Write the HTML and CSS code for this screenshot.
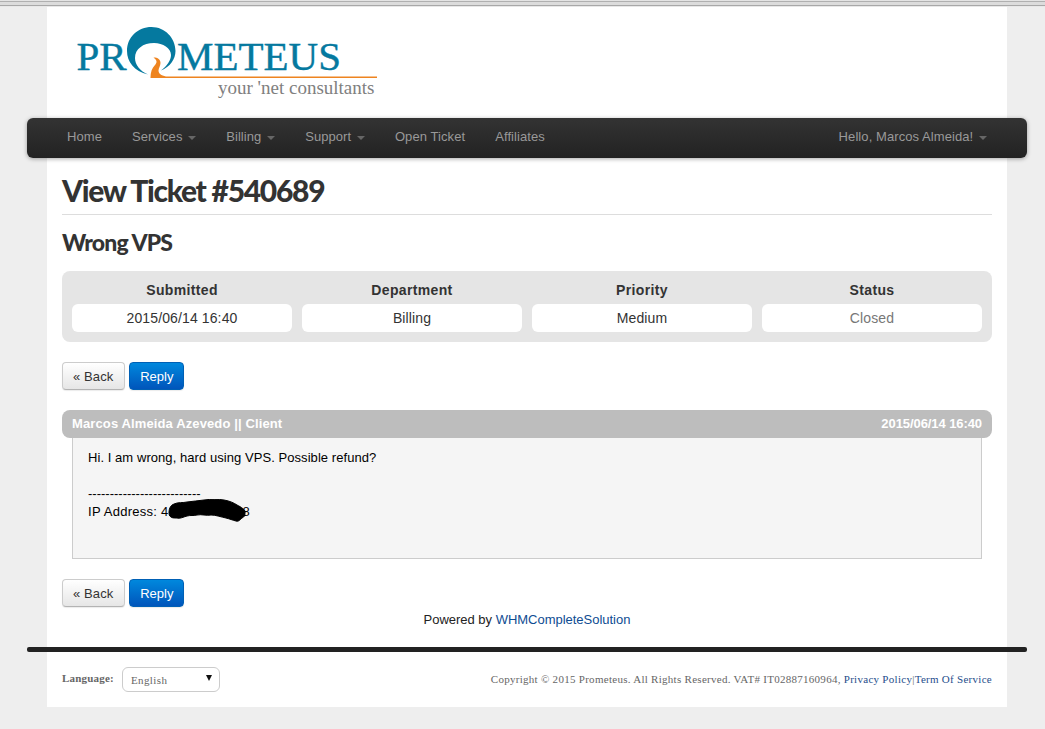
FILE: index.html
```html
<!DOCTYPE html>
<html lang="en">
<head>
<meta charset="utf-8">
<title>View Ticket #540689</title>
<link rel="stylesheet" href="styles.css">
</head>
<body>
<div class="chrome"></div>
<div class="page">
  <header class="brand">
    <svg class="logo" width="310" height="85" viewBox="70 20 310 85" role="img" aria-label="Prometeus">
      <text class="logo-name" x="76.5" y="70">PR</text>
      <text class="logo-name" x="177" y="70">METEUS</text>
      <path class="logo-o" d="M148 74.500C134 71 127 62 127 51C127 37 138 27 151.500 27C165 27 175.500 38 175.500 51C175.500 59 170 67 161 70.500C167 66 171 60 171 55C171 48 163 43 154 43C143 43 135 49 135 58C135 65 140 71 148 74.500Z"/>
      <path class="logo-flame" d="M150.500 77.500C150.500 72 152 68 155 65C157 62.500 157.500 60.500 153.500 57.500C158 57.500 160.500 59.500 160.500 63C160.500 66 158.500 68 158.500 70.500C158.500 73.500 161 75.500 166 76.500L377 76.500L377 78L150.500 78Z"/>
      <text class="logo-tag" x="218" y="94">your 'net consultants</text>
    </svg>
  </header>

  <nav class="navbar">
    <ul class="nav-list">
      <li><a href="#">Home</a></li>
      <li><a href="#">Services <i class="caret"></i></a></li>
      <li><a href="#">Billing <i class="caret"></i></a></li>
      <li><a href="#">Support <i class="caret"></i></a></li>
      <li><a href="#">Open Ticket</a></li>
      <li><a href="#">Affiliates</a></li>
    </ul>
    <ul class="nav-list">
      <li><a href="#">Hello, Marcos Almeida! <i class="caret"></i></a></li>
    </ul>
  </nav>

  <main class="content">
    <h1 class="page-title">View Ticket #540689</h1>
    <h2 class="subject">Wrong VPS</h2>

    <section class="info">
      <div class="info-col"><div class="info-label">Submitted</div><div class="info-value">2015/06/14 16:40</div></div>
      <div class="info-col"><div class="info-label">Department</div><div class="info-value">Billing</div></div>
      <div class="info-col"><div class="info-label">Priority</div><div class="info-value">Medium</div></div>
      <div class="info-col"><div class="info-label">Status</div><div class="info-value closed">Closed</div></div>
    </section>

    <div class="actions">
      <a class="btn" href="#">« Back</a>
      <a class="btn btn-primary" href="#">Reply</a>
    </div>

    <article class="reply">
      <div class="reply-head"><span>Marcos Almeida Azevedo || Client</span><span class="reply-date">2015/06/14 16:40</span></div>
      <div class="reply-body">
        <p>Hi. I am wrong, hard using VPS. Possible refund?</p>
        <p class="sig">--------------------------</p>
        <p class="ip">IP Address: 4<span class="redacted"><svg class="blob" width="82" height="23" viewBox="0 0 82 23" aria-hidden="true"><path d="M3 13C3 9 5 6 8 5C12 3 17 4 21 3C27 2 32 2 38 1C45 0 52 0 58 1C64 2 68 4 71 6C75 8 80 11 79 14C79 17 78 18 76 19C74 21 72 23 70 22C66 21 64 20 60 19C55 18 50 16 45 16C40 17 36 15 31 16C27 17 25 16 21 17C17 18 14 20 11 19C8 19 6 19 5 18C3 17 3 15 3 13Z"/></svg></span>8</p>
      </div>
    </article>

    <div class="actions actions-low">
      <a class="btn" href="#">« Back</a>
      <a class="btn btn-primary" href="#">Reply</a>
    </div>

    <p class="powered">Powered by <a href="#">WHMCompleteSolution</a></p>
  </main>

  <div class="rule"></div>

  <footer class="footer">
    <div class="lang">
      <span class="lang-label">Language:</span>
      <div class="select"><span>English</span><i class="select-arrow"></i></div>
    </div>
    <p class="copyright">Copyright © 2015 Prometeus. All Rights Reserved. VAT# IT02887160964, <a href="#">Privacy Policy</a>|<a href="#">Term Of Service</a></p>
  </footer>
</div>
</body>
</html>
```
FILE: styles.css
```css
* { box-sizing: border-box; }
html, body { margin: 0; padding: 0; }
body {
  background: #eeeeee;
  color: #333333;
  font-family: "Liberation Sans", Arial, sans-serif;
  font-size: 13px;
  line-height: 18px;
}
p, h1, h2, ul { margin: 0; padding: 0; }
a { text-decoration: none; }

.chrome {
  height: 7px;
  background: linear-gradient(#e4e4e4 0 1px, #b0b0b0 1px 2px, #dcdcdc 2px 5px, #a8a8a8 5px 6px, #e8e8e8 6px);
}

.page {
  width: 960px;
  margin-left: 47px;
  background: #ffffff;
  height: 700px;
}

.brand { height: 111px; padding: 13px 0 0 23px; }
.logo { display: block; }
.logo-name {
  font-family: "Liberation Serif", serif;
  font-size: 41px;
  fill: #05799f;
  stroke: #05799f;
  stroke-width: 0.4px;
}
.logo-o { fill: #05799f; }
.logo-flame { fill: #ee8420; }
.logo-tag { font-family: "Liberation Serif", serif; font-size: 19px; fill: #808080; }

.navbar {
  display: flex;
  justify-content: space-between;
  height: 40px;
  margin: 0 -20px;
  padding: 0 25px;
  background: linear-gradient(#333333, #222222);
  border-radius: 6px;
  box-shadow: 0 1px 4px rgba(0, 0, 0, 0.35);
}
.nav-list { display: flex; list-style: none; }
.nav-list a {
  display: block;
  padding: 0 15px;
  line-height: 38px;
  color: #999999;
  letter-spacing: 0.08px;
}
.caret {
  display: inline-block;
  margin-left: 2px;
  vertical-align: middle;
  border-top: 4px solid #666666;
  border-left: 4px solid transparent;
  border-right: 4px solid transparent;
}

.content { padding: 0 15px; }
.page-title {
  height: 57px;
  padding-top: 15px;
  border-bottom: 1px solid #dddddd;
  font-family: Lato, sans-serif;
  font-size: 30px;
  line-height: 34px;
  font-weight: 900;
  letter-spacing: -1.28px;
  color: #333333;
}
.subject {
  margin-top: 13px;
  font-family: Lato, sans-serif;
  font-size: 23px;
  line-height: 28px;
  font-weight: 900;
  letter-spacing: -0.88px;
}

.info {
  display: grid;
  grid-template-columns: repeat(4, 220px);
  gap: 10px;
  margin-top: 15px;
  height: 71px;
  padding: 10px;
  background: #e5e5e5;
  border-radius: 8px;
}
.info-label {
  height: 23px;
  text-align: center;
  font-size: 14px;
  line-height: 18px;
  font-weight: 700;
  letter-spacing: 0.35px;
  color: #333333;
}
.info-value {
  height: 28px;
  background: #ffffff;
  border-radius: 6px;
  text-align: center;
  font-size: 14px;
  line-height: 28px;
  letter-spacing: 0.12px;
}
.closed { color: #777777; }

.actions { display: flex; gap: 4px; margin-top: 20px; }
.actions-low { margin-top: 20px; }
.btn {
  display: block;
  height: 28px;
  padding: 0 11px 0 10px;
  border: 1px solid #cccccc;
  border-bottom-color: #b3b3b3;
  border-radius: 4px;
  background: linear-gradient(#ffffff, #e6e6e6);
  color: #333333;
  line-height: 28px;
  letter-spacing: 0.1px;
  box-shadow: 0 1px 1px rgba(0, 0, 0, 0.08);
}
.btn-primary {
  width: 55px;
  padding: 0;
  text-align: center;
  border-color: #0060b5;
  background: linear-gradient(#0088dd, #0055bb);
  color: #ffffff;
  letter-spacing: 0;
}

.reply { margin-top: 20px; }
.reply-head {
  display: flex;
  justify-content: space-between;
  height: 28px;
  padding: 0 10px;
  background: #bdbdbd;
  border-radius: 8px;
  color: #ffffff;
  font-size: 13px;
  font-weight: 700;
  line-height: 28px;
  letter-spacing: 0.12px;
}
.reply-date { letter-spacing: -0.08px; }
.reply-body {
  height: 121px;
  margin: 0 10px;
  padding: 11px 15px 0;
  background: #f5f5f5;
  border: 1px solid #cccccc;
  border-top: 0;
  color: #000000;
  line-height: 18px;
  letter-spacing: 0.06px;
}
.sig { margin-top: 18px; letter-spacing: 0; }
.ip { letter-spacing: 0.27px; }
.redacted { display: inline-block; width: 74px; height: 10px; position: relative; }
.blob { position: absolute; left: -3px; top: -7px; }
.blob path { fill: #000000; stroke: #000000; stroke-width: 1px; }

.powered { margin-top: 4px; text-align: center; color: #222222; letter-spacing: -0.02px; }
.powered a { color: #0e4c92; }

.rule {
  height: 5px;
  margin: 18px -20px 0;
  background: #222222;
  border-radius: 2px;
}

.footer {
  display: flex;
  justify-content: space-between;
  align-items: center;
  padding: 15px 15px 0;
  font-family: "Liberation Serif", serif;
  font-size: 11px;
  color: #666666;
}
.lang { display: flex; align-items: center; gap: 8px; }
.lang-label { font-weight: 700; letter-spacing: 0.2px; margin-top: -3px; }
.select {
  display: flex;
  justify-content: space-between;
  align-items: center;
  width: 98px;
  height: 25px;
  padding: 0 8px;
  border: 1px solid #cccccc;
  border-radius: 6px;
  letter-spacing: 0.4px;
}
.select-arrow {
  margin-top: -3px;
  margin-right: -1px;
  border-top: 6px solid #111111;
  border-left: 3px solid transparent;
  border-right: 3px solid transparent;
}
.copyright { letter-spacing: 0.28px; margin-top: -2px; }
.copyright a { color: #1f4e8c; }
```
